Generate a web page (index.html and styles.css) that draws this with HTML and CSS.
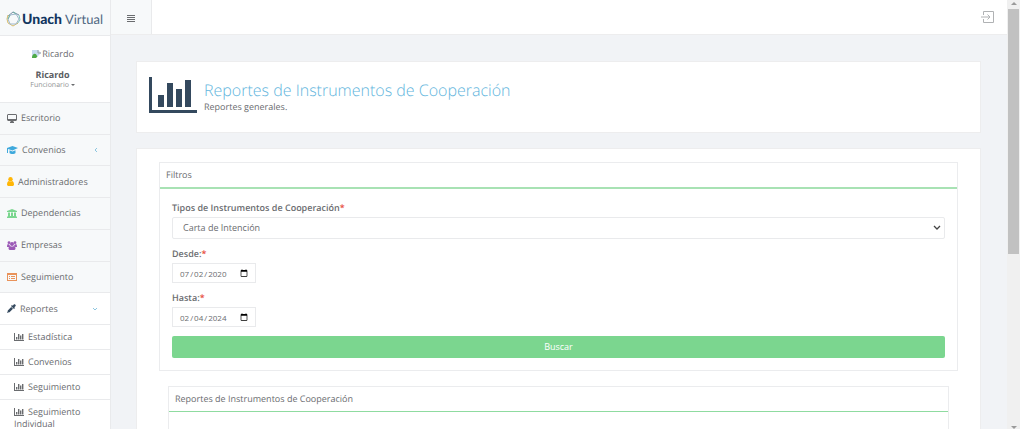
FILE: index.html
```html
<!DOCTYPE html>
<html lang="es">
<head>
    <meta charset="UTF-8">
    <meta name="viewport" content="width=device-width, initial-scale=1.0">
    <title>Unach Virtual</title>
    <link rel="stylesheet" href="styles.css">
</head>
<body>
    <!-- Iconos -->
    <svg class="sprite" aria-hidden="true">
        <symbol id="chart" viewBox="0 0 48 36">
            <path d="M0 0h3v33h45v3H0zM9 18h6v12H9zM18 6h6v24h-6zM27 12h6v18h-6zM36 3h6v27h-6z"/>
        </symbol>
        <symbol id="chart-small" viewBox="0 0 10 8">
            <path d="M0 0h1v7h9v1H0zM2 4h1.400v2.500H2zM4 1h1.400v5.500H4zM6 2.500h1.400v4H6zM8 1h1.400v5.500H8z"/>
        </symbol>
    </svg>

    <div class="app">
        <!-- Menú lateral -->
        <aside class="sidebar">
            <a href="#" class="logo">
                <svg width="15" height="16" viewBox="0 0 15 16" fill="none" stroke-width="1">
                    <path d="M2 5l5-4 6 3" stroke="#7b8fa5"/>
                    <path d="M13 4l1 5-3 4" stroke="#7fc4b8"/>
                    <path d="M12 12l-5 3-5-3" stroke="#d9bd6a"/>
                    <path d="M2 12L1 8l1-4" stroke="#d9bd6a"/>
                    <path d="M4 4l6-1 3 5-3 5H4L2 8z" stroke="#9fb7cc"/>
                    <path d="M4 4L2 8M10 3L7 1" stroke="#6fb5a5"/>
                </svg>
                <span><b>Unach</b> Virtual</span>
            </a>

            <div class="profile">
                <div class="avatar">
                    <svg width="11" height="10" viewBox="0 0 11 10">
                        <path d="M1 1h6l3 3v5H1z" fill="#c5d9ef"/>
                        <path d="M1 8c1-4 4-4 5-1l2 2H1z" fill="#4eaa48"/>
                        <path d="M5 9l5-5v5z" fill="#fff"/>
                        <path d="M7 1v3h3" fill="none" stroke="#9a9fa5"/>
                    </svg><span>Ricardo</span>
                </div>
                <strong>Ricardo</strong>
                <a href="#">Funcionario <i class="caret"></i></a>
            </div>

            <nav>
                <ul class="menu">
                    <li><a href="#">
                        <svg width="10" height="9" viewBox="0 0 10 9" fill="#6a6c6f"><path fill-rule="evenodd" d="M1 0h8l1 1v5l-1 1H6l1 1v1H3V8l1-1H1L0 6V1zM1 1v4h8V1z"/></svg>
                        Escritorio</a></li>
                    <li><a href="#">
                        <svg width="11" height="9" viewBox="0 0 11 9" fill="#3fa9dc"><path d="M5.500 0L11 2 5.500 4.500 1 3v4H0V2zM2.500 4.200l3 1.300 3-1.300V7c-1 1.400-5 1.400-6 0z"/></svg>
                        Convenios
                        <svg class="arrow" width="4" height="6" viewBox="0 0 4 6" fill="none" stroke="#8dc6e0"><path d="M3 1L1 3l2 2"/></svg></a></li>
                    <li><a href="#">
                        <svg width="7" height="9" viewBox="0 0 7 9" fill="#ffb606"><circle cx="3.500" cy="2.300" r="2.200"/><path d="M0 8c0-3 1-4 2-4q1.500 1 3 0c1 0 2 1 2 4l-1 1H1z"/></svg>
                        Administradores</a></li>
                    <li><a href="#">
                        <svg width="10" height="9" viewBox="0 0 10 9" fill="#7bd68f"><path d="M5 0l5 2v1H0V2zM1 3.500h2V7h1V3.500h2V7h1V3.500h2V7l1 1v1H0V8l1-1z"/></svg>
                        Dependencias</a></li>
                    <li><a href="#">
                        <svg width="10" height="9" viewBox="0 0 10 9" fill="#9b59b6"><circle cx="2" cy="1.700" r="1.400"/><circle cx="8" cy="1.700" r="1.400"/><circle cx="5" cy="3" r="2"/><path d="M0 6c0-2 .5-3 1-3l2 1-1 2zM10 6c0-2-.5-3-1-3L7 4l1 2zM1.500 8c0-2 .5-3 1.500-3q2 1 4 0c1 0 1.500 1 1.500 3l-1 1h-5z"/></svg>
                        Empresas</a></li>
                    <li><a href="#">
                        <svg width="10" height="8" viewBox="0 0 10 8" fill="#e9935a"><path fill-rule="evenodd" d="M0 0h10v8H0zM1 2v5h8V2zM2 3h1v1H2zM4 3h4v1H4zM2 5h1v1H2zM4 5h4v1H4z"/></svg>
                        Seguimiento</a></li>
                    <li class="open"><a href="#">
                        <svg width="9" height="9" viewBox="0 0 9 9" fill="#34495e"><path d="M5 1l.7.7L7 .3C8 0 9 1 8.700 2L7.300 3.300 8 4l-1 1-3-3zM4.200 3L6 4.800 2.500 8.200 1 8.500.5 9 0 8.500.5 8l.3-1.500z"/></svg>
                        Reportes
                        <svg class="arrow" width="6" height="4" viewBox="0 0 6 4" fill="none" stroke="#8dc6e0"><path d="M1 1l2 2 2-2"/></svg></a></li>
                </ul>
                <ul class="submenu">
                    <li><a href="#"><svg width="10" height="8"><use href="#chart-small"/></svg>Estadística</a></li>
                    <li><a href="#"><svg width="10" height="8"><use href="#chart-small"/></svg>Convenios</a></li>
                    <li><a href="#"><svg width="10" height="8"><use href="#chart-small"/></svg>Seguimiento</a></li>
                    <li><a href="#"><svg width="10" height="8"><use href="#chart-small"/></svg>Seguimiento Individual</a></li>
                </ul>
            </nav>
        </aside>

        <div class="main">
            <!-- Barra superior -->
            <header class="topbar">
                <button type="button" class="toggle" aria-label="Menú">
                    <svg width="8" height="7" viewBox="0 0 8 7" fill="#6a6c6f"><path d="M0 0h8v1H0zM0 2h8v1H0zM0 4h8v1H0zM0 6h8v1H0z"/></svg>
                </button>
                <a href="#" class="logout" aria-label="Salir">
                    <svg width="13" height="12" viewBox="0 0 13 12" fill="none" stroke="#b0b2b4"><path d="M2.500 4V.5h10v11h-10V8M0 6h9M6.500 3.500L9 6 6.500 8.500"/></svg>
                </a>
            </header>

            <main class="content">
                <section class="panel page-title">
                    <svg width="48" height="36" fill="#34495e"><use href="#chart"/></svg>
                    <div>
                        <h1>Reportes de Instrumentos de Cooperación</h1>
                        <p>Reportes generales.</p>
                    </div>
                </section>

                <section class="panel page-body">
                    <div class="box">
                        <h2>Filtros</h2>
                        <form class="filters">
                            <label for="tipo">Tipos de Instrumentos de Cooperación<em>*</em></label>
                            <div class="select">
                                <select id="tipo">
                                    <option>Carta de Intención</option>
                                </select>
                                <svg width="8" height="6" viewBox="0 0 8 6" fill="none" stroke="#444" stroke-width="1.300"><path d="M1 1l3 3 3-3"/></svg>
                            </div>
                            <label for="desde">Desde:<em>*</em></label>
                            <input type="date" id="desde" value="2020-07-02">
                            <label for="hasta">Hasta:<em>*</em></label>
                            <input type="date" id="hasta" value="2024-02-04">
                            <button type="submit">Buscar</button>
                        </form>
                    </div>

                    <div class="box results">
                        <h2>Reportes de Instrumentos de Cooperación</h2>
                        <div class="results-body"></div>
                    </div>
                </section>
            </main>
        </div>

        <!-- Barra de desplazamiento -->
        <div class="scrollbar">
            <i class="up"></i>
            <div class="track"><div class="thumb"></div></div>
            <i class="down"></i>
        </div>
    </div>
</body>
</html>
```
FILE: styles.css
```css
* {
    box-sizing: border-box;
}

body {
    margin: 0;
    font-family: "Open Sans", "Noto Sans", sans-serif;
    font-size: 9px;
    line-height: 12px;
    color: #6a6c6f;
    background-color: #fff;
    text-rendering: geometricPrecision;
}

a {
    color: inherit;
    text-decoration: none;
}

ul,
h1,
h2,
p {
    margin: 0;
    padding: 0;
    list-style: none;
    font-weight: normal;
}

.sprite {
    position: absolute;
    width: 0;
    height: 0;
}

.app {
    display: flex;
    height: 100vh;
    padding-right: 4px;
    overflow: hidden;
}

/* Menú lateral */
.sidebar {
    flex: 0 0 111px;
    border-right: 1px solid #e9eaec;
    background-color: #fff;
}

.logo {
    display: flex;
    align-items: center;
    gap: 1px;
    height: 36px;
    padding: 3px 0 0 6px;
    border-bottom: 1px solid #e9eaec;
    background-color: #f7f9fa;
    font-family: Lato, sans-serif;
    font-size: 13px;
    line-height: 18px;
    white-space: nowrap;
    color: #4f6781;
}

.logo b {
    font-size: 14px;
    font-weight: 900;
    color: #12365f;
}

.profile {
    display: flex;
    flex-direction: column;
    align-items: center;
    height: 67px;
    padding: 12px 5px 0 0;
    border-bottom: 1px solid #e9eaec;
}

.avatar {
    display: flex;
    align-items: center;
    margin-bottom: 9px;
}

.profile strong {
    color: #5a5c5f;
}

.profile a {
    font-size: 7px;
    line-height: 9px;
    color: #909294;
}

.caret {
    display: inline-block;
    border: 2px solid transparent;
    border-top-color: #6a6c6f;
    border-bottom: 0;
    vertical-align: middle;
}

.menu {
    display: grid;
    grid-auto-rows: 1fr;
    height: 222px;
    background-color: #f7f9fa;
}

.menu li {
    display: flex;
    border-bottom: 1px solid #e9eaec;
}

.menu .open {
    background-color: #fff;
}

.menu a {
    flex: 1;
    display: flex;
    align-items: center;
    gap: 4px;
    padding: 0 12px 0 7px;
}

.menu .arrow {
    margin-left: auto;
}

.submenu li {
    padding: 6px 14px;
    border-bottom: 1px solid #e9eaec;
}

.submenu a {
    display: block;
}

.submenu svg {
    margin-right: 4px;
    fill: #6a6c6f;
    vertical-align: -1px;
}

/* Contenido */
.main {
    flex: 1;
    min-width: 0;
    background-color: #f1f3f6;
}

.topbar {
    display: flex;
    align-items: center;
    justify-content: space-between;
    height: 35px;
    border-bottom: 1px solid #ededee;
    background-color: #fff;
}

.toggle {
    width: 41px;
    height: 34px;
    padding: 0;
    border: 0;
    border-right: 1px solid #e9eaec;
    background-color: #f7f9fa;
}

.logout {
    margin-right: 13px;
    line-height: 0;
}

.content {
    display: grid;
    gap: 15px;
    padding: 26px 26px 0 25px;
}

.panel {
    border: 1px solid #ededee;
    background-color: #fff;
}

.page-title {
    display: flex;
    gap: 7px;
    height: 72px;
    padding: 15px 12px;
}

.page-title h1 {
    margin-top: 2px;
    font-size: 16px;
    font-weight: 300;
    line-height: 22px;
    color: #62b5dd;
}

.page-body {
    padding: 13px 22px;
}

.box {
    border: 1px solid #ebecee;
}

.box h2 {
    padding: 6px;
    border-bottom: 2px solid #a8e2b4;
    font-size: 9px;
    font-weight: 500;
}

.filters {
    display: flex;
    flex-direction: column;
    align-items: flex-start;
    padding: 13px 12px 12px;
}

.filters label {
    margin-bottom: 3px;
    font-weight: 600;
}

.filters em {
    font-style: normal;
    color: #e74c3c;
}

.select {
    display: grid;
    align-items: center;
    width: 100%;
    margin-bottom: 9px;
}

.select select,
.select svg {
    grid-area: 1 / 1;
}

.select svg {
    justify-self: end;
    margin-right: 4px;
    pointer-events: none;
}

.select select {
    appearance: none;
    width: 100%;
    height: 22px;
    padding: 0 10px;
    border: 1px solid #e9eaec;
    border-radius: 2px;
    background-color: #fff;
    font: inherit;
    color: inherit;
}

.filters input {
    width: 84px;
    height: 20px;
    margin-bottom: 9px;
    padding: 0 7px 0 6px;
    border: 1px solid #e9eaec;
    background-color: #fff;
    font-family: inherit;
    font-size: 8px;
    color: inherit;
}

.filters input::-webkit-calendar-picker-indicator {
    width: 8px;
    height: 8px;
    padding: 0;
}

.filters button {
    width: 100%;
    height: 22px;
    border: 0;
    border-radius: 2px;
    background-color: #7bd68f;
    font: inherit;
    color: #fff;
}

.results {
    margin: 15px 9px;
}

.box.results h2 {
    border-bottom: 1px solid #8fdba0;
}

.results-body {
    height: 120px;
}

/* Barra de desplazamiento */
.scrollbar {
    flex: 0 0 13px;
    display: flex;
    flex-direction: column;
    align-items: center;
    background-color: #f0f0f0;
}

.scrollbar .up {
    margin: 2px 0 4px;
    border: 3px solid transparent;
    border-top: 0;
    border-bottom-color: #9a9a9a;
}

.scrollbar .down {
    margin: 2px 0 0;
    border: 3px solid transparent;
    border-bottom: 0;
    border-top-color: #9a9a9a;
}

.track {
    flex: 1;
    width: 11px;
}

.thumb {
    height: 59%;
    background-color: #c1c1c1;
}
```
